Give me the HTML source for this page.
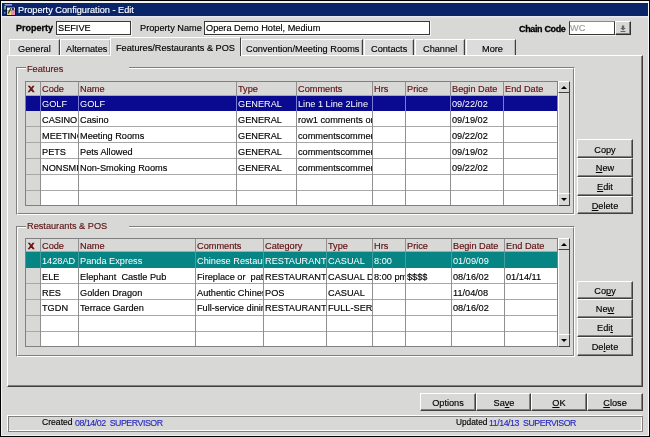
<!DOCTYPE html>
<html><head><meta charset="utf-8"><style>
html,body{margin:0;padding:0;}
body{width:650px;height:437px;position:relative;overflow:hidden;background:#d8d8d7;font-family:"Liberation Sans",sans-serif;font-size:9.2px;color:#000;}
div{position:absolute;}
.t{white-space:pre;line-height:12px;will-change:transform;-webkit-text-stroke:0.15px currentColor;}
u{text-decoration-thickness:1px;text-underline-offset:1px;}
</style></head><body>
<div style="left:0px;top:0px;width:650px;height:437px;background:#000"></div>
<div style="left:1px;top:1px;width:648px;height:435px;background:#f2f2f2"></div>
<div style="left:2px;top:3px;width:646px;height:432px;background:#d8d8d7"></div>
<div style="left:648px;top:1px;width:1px;height:435px;background:#f8f8f8"></div>
<div style="left:1px;top:435px;width:648px;height:1px;background:#f0f0f0"></div>
<div style="left:2px;top:3px;width:646px;height:13px;background:#0a246a"></div>
<div style="left:2px;top:16px;width:646px;height:1px;background:#e6e6ee"></div>
<div style="left:2px;top:17px;width:646px;height:1px;background:#dfdfe4"></div>
<div class="t" style="left:17.5px;top:4px;color:#fff">Property Configuration - Edit</div>
<svg style="position:absolute;left:2px;top:2px" width="16" height="16" viewBox="0 0 16 16">
<rect x="2.5" y="2" width="7.5" height="1.6" fill="#9898dc"/>
<rect x="2" y="4" width="2" height="3.5" fill="#6a9a78"/>
<rect x="2" y="10" width="1.5" height="1.5" fill="#8484d0"/>
<rect x="4.5" y="5" width="9" height="8.5" fill="#000"/>
<rect x="5" y="5.5" width="4" height="3" fill="#f0f0f0"/>
<rect x="9" y="5.5" width="4" height="3" fill="#e0d8f0"/>
<rect x="10" y="6" width="2" height="2" fill="#28287a"/>
<rect x="5" y="8.5" width="4" height="4.5" fill="#e8e078"/>
<rect x="9" y="8.5" width="4" height="4.5" fill="#f08cb0"/>
<path d="M9 6.2L6.2 11.5" stroke="#2e4a28" stroke-width="1.4"/>
</svg>
<div class="t" style="left:15.5px;top:22px;font-weight:bold;font-size:9px;-webkit-text-stroke:0.3px #000">Property</div>
<div style="left:56px;top:21px;width:76px;height:15px;background:#f4f4f4"></div>
<div style="left:56px;top:21px;width:75px;height:14px;background:#fff;border:1px solid #383838;border-top-color:#383838;box-sizing:border-box"></div>
<div class="t" style="left:57.5px;top:22px;">SEFIVE</div>
<div class="t" style="left:139.5px;top:22px;">Property Name</div>
<div style="left:204px;top:21px;width:227px;height:15px;background:#f4f4f4"></div>
<div style="left:204px;top:21px;width:226px;height:14px;background:#fff;border:1px solid #383838;border-top-color:#383838;box-sizing:border-box"></div>
<div class="t" style="left:206.0px;top:22px;">Opera Demo Hotel, Medium</div>
<div class="t" style="left:518.5px;top:23px;font-weight:bold;font-size:9px;letter-spacing:-0.35px;-webkit-text-stroke:0.3px #000">Chain Code</div>
<div style="left:569px;top:21px;width:47px;height:15px;background:#f4f4f4"></div>
<div style="left:569px;top:21px;width:46px;height:14px;background:#fff;border:1px solid #383838;border-top-color:#8a8a8a;box-sizing:border-box"></div>
<div class="t" style="left:570.0px;top:22px;color:#9a9a9a">WC</div>
<div style="left:615px;top:21px;width:16px;height:14px;background:#d8d8d7;border-top:1px solid #fff;border-left:1px solid #fff;border-right:1px solid #303030;border-bottom:1px solid #303030;box-sizing:border-box"></div>
<div style="left:616px;top:22px;width:14px;height:12px;border-right:1px solid #808080;border-bottom:1px solid #808080;box-sizing:border-box"></div>
<svg style="position:absolute;left:620px;top:25px" width="6" height="7" viewBox="0 0 6 7"><path d="M1.8 0.5h2.4v2.5h1.6L3 5.6L0.2 3h1.6z" fill="#666"/><rect x="0.5" y="6" width="5" height="1" fill="#666"/></svg>
<div style="left:7px;top:55px;width:636px;height:332px;border-top:1px solid #fff;border-left:1px solid #fff;border-right:1px solid #404040;border-bottom:1px solid #404040;box-sizing:border-box"></div>
<div style="left:8px;top:56px;width:634px;height:330px;border-right:1px solid #808080;border-bottom:1px solid #808080;box-sizing:border-box"></div>
<div style="left:9px;top:39px;width:51px;height:16px;background:#dcdcdc;border-top:1px solid #fff;border-left:1px solid #fff;border-right:1px solid #404040;box-sizing:border-box"></div>
<div style="left:58px;top:40px;width:1px;height:15px;background:#b8b8b8"></div>
<div class="t" style="left:18.0px;top:43px;">General</div>
<div style="left:60px;top:39px;width:51px;height:16px;background:#dcdcdc;border-top:1px solid #fff;border-left:1px solid #fff;border-right:1px solid #404040;box-sizing:border-box"></div>
<div style="left:109px;top:40px;width:1px;height:15px;background:#b8b8b8"></div>
<div class="t" style="left:65.5px;top:43px;">Alternates</div>
<div style="left:110px;top:37px;width:131px;height:19px;background:#d8d8d7;border-top:1px solid #fff;border-left:1px solid #fff;border-right:1px solid #404040;box-sizing:border-box"></div>
<div class="t" style="left:116.0px;top:42px;">Features/Restaurants &amp; POS</div>
<div style="left:241px;top:39px;width:122px;height:16px;background:#dcdcdc;border-top:1px solid #fff;border-left:1px solid #fff;border-right:1px solid #404040;box-sizing:border-box"></div>
<div style="left:361px;top:40px;width:1px;height:15px;background:#b8b8b8"></div>
<div class="t" style="left:245.5px;top:43px;">Convention/Meeting Rooms</div>
<div style="left:364px;top:39px;width:50px;height:16px;background:#dcdcdc;border-top:1px solid #fff;border-left:1px solid #fff;border-right:1px solid #404040;box-sizing:border-box"></div>
<div style="left:412px;top:40px;width:1px;height:15px;background:#b8b8b8"></div>
<div class="t" style="left:370.5px;top:43px;">Contacts</div>
<div style="left:415px;top:39px;width:50px;height:16px;background:#dcdcdc;border-top:1px solid #fff;border-left:1px solid #fff;border-right:1px solid #404040;box-sizing:border-box"></div>
<div style="left:463px;top:40px;width:1px;height:15px;background:#b8b8b8"></div>
<div class="t" style="left:422.5px;top:43px;">Channel</div>
<div style="left:466px;top:39px;width:50px;height:16px;background:#dcdcdc;border-top:1px solid #fff;border-left:1px solid #fff;border-right:1px solid #404040;box-sizing:border-box"></div>
<div style="left:514px;top:40px;width:1px;height:15px;background:#b8b8b8"></div>
<div class="t" style="left:481.5px;top:43px;">More</div>
<div style="left:16px;top:67px;width:559px;height:148px;border-top:1px solid #808080;border-left:1px solid #808080;border-right:1px solid #fff;border-bottom:1px solid #fff;box-sizing:border-box"></div>
<div style="left:17px;top:68px;width:557px;height:146px;border-top:1px solid #fff;border-left:1px solid #fff;border-right:1px solid #808080;border-bottom:1px solid #808080;box-sizing:border-box"></div>
<div style="left:26px;top:66px;width:103px;height:4px;background:#d8d8d7"></div>
<div class="t" style="left:27.0px;top:63px;color:#5c1414">Features</div>
<div style="left:25px;top:81px;width:533px;height:125px;background:#fff;border:1px solid #808080;box-sizing:border-box"></div>
<div style="left:26px;top:82px;width:531px;height:13px;background:#d8d8d7"></div>
<div style="left:26px;top:82px;width:14px;height:123px;background:#d8d8d7"></div>
<div style="left:26px;top:95px;width:531px;height:1px;background:#a8a8a8"></div>
<div style="left:26px;top:110px;width:531px;height:1px;background:#a8a8a8"></div>
<div style="left:26px;top:126px;width:531px;height:1px;background:#a8a8a8"></div>
<div style="left:26px;top:142px;width:531px;height:1px;background:#a8a8a8"></div>
<div style="left:26px;top:158px;width:531px;height:1px;background:#a8a8a8"></div>
<div style="left:26px;top:174px;width:531px;height:1px;background:#a8a8a8"></div>
<div style="left:26px;top:190px;width:531px;height:1px;background:#a8a8a8"></div>
<div style="left:26px;top:96px;width:531px;height:15px;background:#0a0a90"></div>
<div style="left:40px;top:82px;width:1px;height:123px;background:#909090"></div>
<div style="left:40px;top:96px;width:1px;height:15px;background:#7a7ad8"></div>
<div style="left:78px;top:82px;width:1px;height:123px;background:#909090"></div>
<div style="left:78px;top:96px;width:1px;height:15px;background:#7a7ad8"></div>
<div style="left:236px;top:82px;width:1px;height:123px;background:#909090"></div>
<div style="left:236px;top:96px;width:1px;height:15px;background:#7a7ad8"></div>
<div style="left:296px;top:82px;width:1px;height:123px;background:#909090"></div>
<div style="left:296px;top:96px;width:1px;height:15px;background:#7a7ad8"></div>
<div style="left:372px;top:82px;width:1px;height:123px;background:#909090"></div>
<div style="left:372px;top:96px;width:1px;height:15px;background:#7a7ad8"></div>
<div style="left:405px;top:82px;width:1px;height:123px;background:#909090"></div>
<div style="left:405px;top:96px;width:1px;height:15px;background:#7a7ad8"></div>
<div style="left:450px;top:82px;width:1px;height:123px;background:#909090"></div>
<div style="left:450px;top:96px;width:1px;height:15px;background:#7a7ad8"></div>
<div style="left:503px;top:82px;width:1px;height:123px;background:#909090"></div>
<div style="left:503px;top:96px;width:1px;height:15px;background:#7a7ad8"></div>
<div class="t" style="left:28.0px;top:83px;font-weight:bold;font-size:9.6px;color:#680808;-webkit-text-stroke:0.45px #680808">X</div>
<div class="t" style="left:41.5px;top:83px;color:#5e0e0e">Code</div>
<div class="t" style="left:79.5px;top:83px;color:#5e0e0e">Name</div>
<div class="t" style="left:237.5px;top:83px;color:#5e0e0e">Type</div>
<div class="t" style="left:297.5px;top:83px;color:#5e0e0e">Comments</div>
<div class="t" style="left:373.5px;top:83px;color:#5e0e0e">Hrs</div>
<div class="t" style="left:406.5px;top:83px;color:#5e0e0e">Price</div>
<div class="t" style="left:451.5px;top:83px;color:#5e0e0e">Begin Date</div>
<div class="t" style="left:504.5px;top:83px;color:#5e0e0e">End Date</div>
<div class="t" style="left:41.5px;top:98px;width:36px;overflow:hidden;color:#fff;-webkit-text-stroke:0">GOLF</div>
<div class="t" style="left:79.5px;top:98px;width:156px;overflow:hidden;color:#fff;-webkit-text-stroke:0">GOLF</div>
<div class="t" style="left:237.5px;top:98px;width:58px;overflow:hidden;color:#fff;-webkit-text-stroke:0">GENERAL</div>
<div class="t" style="left:297.5px;top:98px;width:74px;overflow:hidden;color:#fff;-webkit-text-stroke:0">Line 1 Line 2Line</div>
<div class="t" style="left:451.5px;top:98px;width:51px;overflow:hidden;color:#fff;-webkit-text-stroke:0">09/22/02</div>
<div class="t" style="left:41.5px;top:113.5px;width:36px;overflow:hidden;color:#000">CASINO</div>
<div class="t" style="left:79.5px;top:113.5px;width:156px;overflow:hidden;color:#000">Casino</div>
<div class="t" style="left:237.5px;top:113.5px;width:58px;overflow:hidden;color:#000">GENERAL</div>
<div class="t" style="left:297.5px;top:113.5px;width:74px;overflow:hidden;color:#000">row1 comments on</div>
<div class="t" style="left:451.5px;top:113.5px;width:51px;overflow:hidden;color:#000">09/19/02</div>
<div class="t" style="left:41.5px;top:129.5px;width:36px;overflow:hidden;color:#000">MEETING</div>
<div class="t" style="left:79.5px;top:129.5px;width:156px;overflow:hidden;color:#000">Meeting Rooms</div>
<div class="t" style="left:237.5px;top:129.5px;width:58px;overflow:hidden;color:#000">GENERAL</div>
<div class="t" style="left:297.5px;top:129.5px;width:74px;overflow:hidden;color:#000">commentscomments</div>
<div class="t" style="left:451.5px;top:129.5px;width:51px;overflow:hidden;color:#000">09/22/02</div>
<div class="t" style="left:41.5px;top:145.5px;width:36px;overflow:hidden;color:#000">PETS</div>
<div class="t" style="left:79.5px;top:145.5px;width:156px;overflow:hidden;color:#000">Pets Allowed</div>
<div class="t" style="left:237.5px;top:145.5px;width:58px;overflow:hidden;color:#000">GENERAL</div>
<div class="t" style="left:297.5px;top:145.5px;width:74px;overflow:hidden;color:#000">commentscomments</div>
<div class="t" style="left:451.5px;top:145.5px;width:51px;overflow:hidden;color:#000">09/19/02</div>
<div class="t" style="left:41.5px;top:161.5px;width:36px;overflow:hidden;color:#000">NONSMK</div>
<div class="t" style="left:79.5px;top:161.5px;width:156px;overflow:hidden;color:#000">Non-Smoking Rooms</div>
<div class="t" style="left:237.5px;top:161.5px;width:58px;overflow:hidden;color:#000">GENERAL</div>
<div class="t" style="left:297.5px;top:161.5px;width:74px;overflow:hidden;color:#000">commentscomments</div>
<div class="t" style="left:451.5px;top:161.5px;width:51px;overflow:hidden;color:#000">09/22/02</div>
<div style="left:558px;top:81px;width:12px;height:125px;background:#d8d8d7;border-top:1px solid #fff;border-left:1px solid #fff;border-right:1px solid #404040;border-bottom:1px solid #404040;box-sizing:border-box"></div>
<div style="left:558px;top:81px;width:12px;height:12px;background:#d8d8d7;border-top:1px solid #fff;border-left:1px solid #fff;border-right:1px solid #404040;border-bottom:1px solid #404040;box-sizing:border-box"></div>
<div style="left:558px;top:193px;width:12px;height:13px;background:#d8d8d7;border-top:1px solid #fff;border-left:1px solid #fff;border-right:1px solid #404040;border-bottom:1px solid #404040;box-sizing:border-box"></div>
<svg style="position:absolute;left:561px;top:86px" width="6" height="3"><path d="M3 0L6 3H0z" fill="#000"/></svg>
<svg style="position:absolute;left:561px;top:198px" width="6" height="3"><path d="M0 0H6L3 3z" fill="#000"/></svg>
<div style="left:577px;top:139px;width:56px;height:19px;background:#d8d8d7;border-top:1px solid #fff;border-left:1px solid #fff;border-right:1px solid #404040;border-bottom:1px solid #404040;box-sizing:border-box"></div>
<div style="left:578px;top:140px;width:54px;height:17px;border-right:1px solid #808080;border-bottom:1px solid #808080;box-sizing:border-box"></div>
<div class="t" style="left:505.0px;top:144px;width:200px;text-align:center;">Copy</div>
<div style="left:577px;top:158px;width:56px;height:19px;background:#d8d8d7;border-top:1px solid #fff;border-left:1px solid #fff;border-right:1px solid #404040;border-bottom:1px solid #404040;box-sizing:border-box"></div>
<div style="left:578px;top:159px;width:54px;height:17px;border-right:1px solid #808080;border-bottom:1px solid #808080;box-sizing:border-box"></div>
<div class="t" style="left:505.0px;top:162px;width:200px;text-align:center;"><u>N</u>ew</div>
<div style="left:577px;top:177px;width:56px;height:19px;background:#d8d8d7;border-top:1px solid #fff;border-left:1px solid #fff;border-right:1px solid #404040;border-bottom:1px solid #404040;box-sizing:border-box"></div>
<div style="left:578px;top:178px;width:54px;height:17px;border-right:1px solid #808080;border-bottom:1px solid #808080;box-sizing:border-box"></div>
<div class="t" style="left:505.0px;top:181px;width:200px;text-align:center;"><u>E</u>dit</div>
<div style="left:577px;top:196px;width:56px;height:18px;background:#d8d8d7;border-top:1px solid #fff;border-left:1px solid #fff;border-right:1px solid #404040;border-bottom:1px solid #404040;box-sizing:border-box"></div>
<div style="left:578px;top:197px;width:54px;height:16px;border-right:1px solid #808080;border-bottom:1px solid #808080;box-sizing:border-box"></div>
<div class="t" style="left:505.0px;top:200px;width:200px;text-align:center;"><u>D</u>elete</div>
<div style="left:16px;top:226px;width:559px;height:131px;border-top:1px solid #808080;border-left:1px solid #808080;border-right:1px solid #fff;border-bottom:1px solid #fff;box-sizing:border-box"></div>
<div style="left:17px;top:227px;width:557px;height:129px;border-top:1px solid #fff;border-left:1px solid #fff;border-right:1px solid #808080;border-bottom:1px solid #808080;box-sizing:border-box"></div>
<div style="left:26px;top:225px;width:103px;height:4px;background:#d8d8d7"></div>
<div class="t" style="left:27.0px;top:220px;color:#5c1414">Restaurants &amp; POS</div>
<div style="left:25px;top:238px;width:533px;height:109px;background:#fff;border:1px solid #808080;box-sizing:border-box"></div>
<div style="left:26px;top:239px;width:531px;height:12px;background:#d8d8d7"></div>
<div style="left:26px;top:239px;width:14px;height:107px;background:#d8d8d7"></div>
<div style="left:26px;top:251px;width:531px;height:1px;background:#a8a8a8"></div>
<div style="left:26px;top:267px;width:531px;height:1px;background:#a8a8a8"></div>
<div style="left:26px;top:283px;width:531px;height:1px;background:#a8a8a8"></div>
<div style="left:26px;top:299px;width:531px;height:1px;background:#a8a8a8"></div>
<div style="left:26px;top:315px;width:531px;height:1px;background:#a8a8a8"></div>
<div style="left:26px;top:331px;width:531px;height:1px;background:#a8a8a8"></div>
<div style="left:26px;top:252px;width:531px;height:16px;background:#078585"></div>
<div style="left:40px;top:239px;width:1px;height:107px;background:#909090"></div>
<div style="left:40px;top:252px;width:1px;height:16px;background:#40a0a0"></div>
<div style="left:78px;top:239px;width:1px;height:107px;background:#909090"></div>
<div style="left:78px;top:252px;width:1px;height:16px;background:#40a0a0"></div>
<div style="left:195px;top:239px;width:1px;height:107px;background:#909090"></div>
<div style="left:195px;top:252px;width:1px;height:16px;background:#40a0a0"></div>
<div style="left:263px;top:239px;width:1px;height:107px;background:#909090"></div>
<div style="left:263px;top:252px;width:1px;height:16px;background:#40a0a0"></div>
<div style="left:326px;top:239px;width:1px;height:107px;background:#909090"></div>
<div style="left:326px;top:252px;width:1px;height:16px;background:#40a0a0"></div>
<div style="left:372px;top:239px;width:1px;height:107px;background:#909090"></div>
<div style="left:372px;top:252px;width:1px;height:16px;background:#40a0a0"></div>
<div style="left:405px;top:239px;width:1px;height:107px;background:#909090"></div>
<div style="left:405px;top:252px;width:1px;height:16px;background:#40a0a0"></div>
<div style="left:451px;top:239px;width:1px;height:107px;background:#909090"></div>
<div style="left:451px;top:252px;width:1px;height:16px;background:#40a0a0"></div>
<div style="left:504px;top:239px;width:1px;height:107px;background:#909090"></div>
<div style="left:504px;top:252px;width:1px;height:16px;background:#40a0a0"></div>
<div class="t" style="left:28.0px;top:240px;font-weight:bold;font-size:9.6px;color:#680808;-webkit-text-stroke:0.45px #680808">X</div>
<div class="t" style="left:41.5px;top:240px;color:#5e0e0e">Code</div>
<div class="t" style="left:79.5px;top:240px;color:#5e0e0e">Name</div>
<div class="t" style="left:196.5px;top:240px;color:#5e0e0e">Comments</div>
<div class="t" style="left:264.5px;top:240px;color:#5e0e0e">Category</div>
<div class="t" style="left:327.5px;top:240px;color:#5e0e0e">Type</div>
<div class="t" style="left:373.5px;top:240px;color:#5e0e0e">Hrs</div>
<div class="t" style="left:406.5px;top:240px;color:#5e0e0e">Price</div>
<div class="t" style="left:452.5px;top:240px;color:#5e0e0e">Begin Date</div>
<div class="t" style="left:505.5px;top:240px;color:#5e0e0e">End Date</div>
<div class="t" style="left:41.5px;top:255px;width:36px;overflow:hidden;color:#fff;-webkit-text-stroke:0">1428AD</div>
<div class="t" style="left:79.5px;top:255px;width:115px;overflow:hidden;color:#fff;-webkit-text-stroke:0">Panda Express</div>
<div class="t" style="left:196.5px;top:255px;width:66px;overflow:hidden;color:#fff;-webkit-text-stroke:0">Chinese Restaurant</div>
<div class="t" style="left:264.5px;top:255px;width:61px;overflow:hidden;color:#fff;-webkit-text-stroke:0">RESTAURANT</div>
<div class="t" style="left:327.5px;top:255px;width:44px;overflow:hidden;color:#fff;-webkit-text-stroke:0">CASUAL</div>
<div class="t" style="left:373.5px;top:255px;width:31px;overflow:hidden;color:#fff;-webkit-text-stroke:0">8:00</div>
<div class="t" style="left:452.5px;top:255px;width:51px;overflow:hidden;color:#fff;-webkit-text-stroke:0">01/09/09</div>
<div class="t" style="left:41.5px;top:271px;width:36px;overflow:hidden;color:#000">ELE</div>
<div class="t" style="left:79.5px;top:271px;width:115px;overflow:hidden;color:#000">Elephant&nbsp; Castle Pub</div>
<div class="t" style="left:196.5px;top:271px;width:66px;overflow:hidden;color:#000">Fireplace or&nbsp; patio</div>
<div class="t" style="left:264.5px;top:271px;width:61px;overflow:hidden;color:#000">RESTAURANT</div>
<div class="t" style="left:327.5px;top:271px;width:44px;overflow:hidden;color:#000">CASUAL DINING</div>
<div class="t" style="left:373.5px;top:271px;width:31px;overflow:hidden;color:#000">8:00 pm</div>
<div class="t" style="left:406.5px;top:271px;width:44px;overflow:hidden;color:#000">$$$$</div>
<div class="t" style="left:452.5px;top:271px;width:51px;overflow:hidden;color:#000">08/16/02</div>
<div class="t" style="left:505.5px;top:271px;width:51px;overflow:hidden;color:#000">01/14/11</div>
<div class="t" style="left:41.5px;top:286.5px;width:36px;overflow:hidden;color:#000">RES</div>
<div class="t" style="left:79.5px;top:286.5px;width:115px;overflow:hidden;color:#000">Golden Dragon</div>
<div class="t" style="left:196.5px;top:286.5px;width:66px;overflow:hidden;color:#000">Authentic Chinese</div>
<div class="t" style="left:264.5px;top:286.5px;width:61px;overflow:hidden;color:#000">POS</div>
<div class="t" style="left:327.5px;top:286.5px;width:44px;overflow:hidden;color:#000">CASUAL</div>
<div class="t" style="left:452.5px;top:286.5px;width:51px;overflow:hidden;color:#000">11/04/08</div>
<div class="t" style="left:41.5px;top:302px;width:36px;overflow:hidden;color:#000">TGDN</div>
<div class="t" style="left:79.5px;top:302px;width:115px;overflow:hidden;color:#000">Terrace Garden</div>
<div class="t" style="left:196.5px;top:302px;width:66px;overflow:hidden;color:#000">Full-service dining</div>
<div class="t" style="left:264.5px;top:302px;width:61px;overflow:hidden;color:#000">RESTAURANT</div>
<div class="t" style="left:327.5px;top:302px;width:44px;overflow:hidden;color:#000">FULL-SERVICE</div>
<div class="t" style="left:452.5px;top:302px;width:51px;overflow:hidden;color:#000">08/16/02</div>
<div style="left:558px;top:238px;width:12px;height:109px;background:#d8d8d7;border-top:1px solid #fff;border-left:1px solid #fff;border-right:1px solid #404040;border-bottom:1px solid #404040;box-sizing:border-box"></div>
<div style="left:558px;top:238px;width:12px;height:12px;background:#d8d8d7;border-top:1px solid #fff;border-left:1px solid #fff;border-right:1px solid #404040;border-bottom:1px solid #404040;box-sizing:border-box"></div>
<div style="left:558px;top:334px;width:12px;height:13px;background:#d8d8d7;border-top:1px solid #fff;border-left:1px solid #fff;border-right:1px solid #404040;border-bottom:1px solid #404040;box-sizing:border-box"></div>
<svg style="position:absolute;left:561px;top:243px" width="6" height="3"><path d="M3 0L6 3H0z" fill="#000"/></svg>
<svg style="position:absolute;left:561px;top:339px" width="6" height="3"><path d="M0 0H6L3 3z" fill="#000"/></svg>
<div style="left:577px;top:281px;width:56px;height:18px;background:#d8d8d7;border-top:1px solid #fff;border-left:1px solid #fff;border-right:1px solid #404040;border-bottom:1px solid #404040;box-sizing:border-box"></div>
<div style="left:578px;top:282px;width:54px;height:16px;border-right:1px solid #808080;border-bottom:1px solid #808080;box-sizing:border-box"></div>
<div class="t" style="left:505.0px;top:285px;width:200px;text-align:center;">Co<u>p</u>y</div>
<div style="left:577px;top:299px;width:56px;height:19px;background:#d8d8d7;border-top:1px solid #fff;border-left:1px solid #fff;border-right:1px solid #404040;border-bottom:1px solid #404040;box-sizing:border-box"></div>
<div style="left:578px;top:300px;width:54px;height:17px;border-right:1px solid #808080;border-bottom:1px solid #808080;box-sizing:border-box"></div>
<div class="t" style="left:505.0px;top:303px;width:200px;text-align:center;">Ne<u>w</u></div>
<div style="left:577px;top:318px;width:56px;height:19px;background:#d8d8d7;border-top:1px solid #fff;border-left:1px solid #fff;border-right:1px solid #404040;border-bottom:1px solid #404040;box-sizing:border-box"></div>
<div style="left:578px;top:319px;width:54px;height:17px;border-right:1px solid #808080;border-bottom:1px solid #808080;box-sizing:border-box"></div>
<div class="t" style="left:505.0px;top:322px;width:200px;text-align:center;">Edi<u>t</u></div>
<div style="left:577px;top:337px;width:56px;height:19px;background:#d8d8d7;border-top:1px solid #fff;border-left:1px solid #fff;border-right:1px solid #404040;border-bottom:1px solid #404040;box-sizing:border-box"></div>
<div style="left:578px;top:338px;width:54px;height:17px;border-right:1px solid #808080;border-bottom:1px solid #808080;box-sizing:border-box"></div>
<div class="t" style="left:505.0px;top:341px;width:200px;text-align:center;">De<u>l</u>ete</div>
<div style="left:420px;top:393px;width:56px;height:18px;background:#d8d8d7;border-top:1px solid #fff;border-left:1px solid #fff;border-right:1px solid #404040;border-bottom:1px solid #404040;box-sizing:border-box"></div>
<div style="left:421px;top:394px;width:54px;height:16px;border-right:1px solid #808080;border-bottom:1px solid #808080;box-sizing:border-box"></div>
<div class="t" style="left:348.0px;top:397px;width:200px;text-align:center;">Options</div>
<div style="left:476px;top:393px;width:55px;height:18px;background:#d8d8d7;border-top:1px solid #fff;border-left:1px solid #fff;border-right:1px solid #404040;border-bottom:1px solid #404040;box-sizing:border-box"></div>
<div style="left:477px;top:394px;width:53px;height:16px;border-right:1px solid #808080;border-bottom:1px solid #808080;box-sizing:border-box"></div>
<div class="t" style="left:403.5px;top:397px;width:200px;text-align:center;">Sa<u>v</u>e</div>
<div style="left:531px;top:393px;width:56px;height:18px;background:#d8d8d7;border-top:1px solid #fff;border-left:1px solid #fff;border-right:1px solid #404040;border-bottom:1px solid #404040;box-sizing:border-box"></div>
<div style="left:532px;top:394px;width:54px;height:16px;border-right:1px solid #808080;border-bottom:1px solid #808080;box-sizing:border-box"></div>
<div class="t" style="left:459.0px;top:397px;width:200px;text-align:center;"><u>O</u>K</div>
<div style="left:587px;top:393px;width:56px;height:18px;background:#d8d8d7;border-top:1px solid #fff;border-left:1px solid #fff;border-right:1px solid #404040;border-bottom:1px solid #404040;box-sizing:border-box"></div>
<div style="left:588px;top:394px;width:54px;height:16px;border-right:1px solid #808080;border-bottom:1px solid #808080;box-sizing:border-box"></div>
<div class="t" style="left:515.0px;top:397px;width:200px;text-align:center;"><u>C</u>lose</div>
<div style="left:7px;top:415px;width:635px;height:16px;border:1px solid #fff;box-sizing:border-box"></div>
<div style="left:8px;top:416px;width:635px;height:16px;border:1px solid #808080;box-sizing:border-box"></div>
<div class="t" style="left:42.0px;top:416px;font-size:8.6px">Created</div>
<div class="t" style="left:75.0px;top:417px;color:#2a2ac0;letter-spacing:-0.45px;font-size:8.8px">08/14/02&nbsp; SUPERVISOR</div>
<div class="t" style="left:455.5px;top:416px;font-size:8.3px">Updated</div>
<div class="t" style="left:489.0px;top:417px;color:#2a2ac0;letter-spacing:-0.45px;font-size:8.8px">11/14/13&nbsp; SUPERVISOR</div>
</body></html>
